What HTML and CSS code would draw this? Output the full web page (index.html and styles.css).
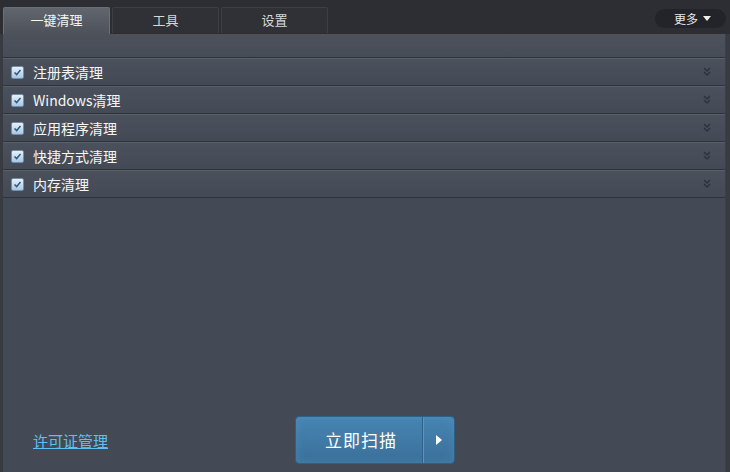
FILE: index.html
```html
<!DOCTYPE html>
<html lang="zh">
<head>
<meta charset="utf-8">
<link rel="stylesheet" href="styles.css">
</head>
<body>
<div class="app">
  <div class="topbar">
    <div class="tabs">
      <div class="tab active">一键清理</div>
      <div class="tab">工具</div>
      <div class="tab">设置</div>
    </div>
    <div class="more">更多 <span class="caret"></span></div>
  </div>
  <div class="panel">
    <div class="subhead"></div>
    <div class="rows">
      <div class="row"><span class="cb"><svg viewBox="0 0 13 13" width="13" height="13"><path d="M3 6.5 L5.5 9 L10 3.5" fill="none" stroke="#2a5a86" stroke-width="1.8"/></svg></span><span class="label">注册表清理</span><span class="chev"><svg viewBox="0 0 8 10" width="8" height="10"><path d="M1 1 L4 4 L7 1 M1 5 L4 8 L7 5" fill="none" stroke="#2a2e35" stroke-width="1.5"/></svg></span></div>
      <div class="row"><span class="cb"><svg viewBox="0 0 13 13" width="13" height="13"><path d="M3 6.5 L5.5 9 L10 3.5" fill="none" stroke="#2a5a86" stroke-width="1.8"/></svg></span><span class="label">Windows清理</span><span class="chev"><svg viewBox="0 0 8 10" width="8" height="10"><path d="M1 1 L4 4 L7 1 M1 5 L4 8 L7 5" fill="none" stroke="#2a2e35" stroke-width="1.5"/></svg></span></div>
      <div class="row"><span class="cb"><svg viewBox="0 0 13 13" width="13" height="13"><path d="M3 6.5 L5.5 9 L10 3.5" fill="none" stroke="#2a5a86" stroke-width="1.8"/></svg></span><span class="label">应用程序清理</span><span class="chev"><svg viewBox="0 0 8 10" width="8" height="10"><path d="M1 1 L4 4 L7 1 M1 5 L4 8 L7 5" fill="none" stroke="#2a2e35" stroke-width="1.5"/></svg></span></div>
      <div class="row"><span class="cb"><svg viewBox="0 0 13 13" width="13" height="13"><path d="M3 6.5 L5.5 9 L10 3.5" fill="none" stroke="#2a5a86" stroke-width="1.8"/></svg></span><span class="label">快捷方式清理</span><span class="chev"><svg viewBox="0 0 8 10" width="8" height="10"><path d="M1 1 L4 4 L7 1 M1 5 L4 8 L7 5" fill="none" stroke="#2a2e35" stroke-width="1.5"/></svg></span></div>
      <div class="row"><span class="cb"><svg viewBox="0 0 13 13" width="13" height="13"><path d="M3 6.5 L5.5 9 L10 3.5" fill="none" stroke="#2a5a86" stroke-width="1.8"/></svg></span><span class="label">内存清理</span><span class="chev"><svg viewBox="0 0 8 10" width="8" height="10"><path d="M1 1 L4 4 L7 1 M1 5 L4 8 L7 5" fill="none" stroke="#2a2e35" stroke-width="1.5"/></svg></span></div>
    </div>
    <div class="spacer"></div>
    <div class="footer">
      <a class="license" href="#">许可证管理</a>
      <div class="scan">
        <span class="scan-main">立即扫描</span>
        <span class="scan-arrow"><svg viewBox="0 0 6 10" width="6" height="10"><path d="M0 0 L6 5 L0 10 Z" fill="#fff"/></svg></span>
      </div>
    </div>
  </div>
</div>
</body>
</html>
```

FILE: styles.css
```css
* { box-sizing: border-box; }
html, body { margin: 0; padding: 0; }
body {
  width: 730px;
  height: 472px;
  background: #2c2e33;
  font-family: "Noto Sans CJK SC", "Liberation Sans", sans-serif;
  overflow: hidden;
}
.app {
  display: flex;
  flex-direction: column;
  height: 472px;
}
.topbar {
  display: flex;
  justify-content: space-between;
  align-items: flex-start;
  height: 34px;
  padding: 7px 4px 0 3px;
}
.tabs {
  display: flex;
  align-items: flex-end;
  gap: 2px;
  height: 27px;
}
.tab {
  width: 107px;
  height: 26px;
  margin-bottom: 1px;
  background: #2f3136;
  border: 1px solid #3c3f45;
  border-bottom: none;
  border-radius: 2px 2px 0 0;
  color: #d8d8d8;
  font-size: 13px;
  line-height: 24px;
  text-align: center;
}
.tab.active {
  height: 27px;
  margin-bottom: 0;
  background: linear-gradient(#60656e, #4c515a);
  border-color: #6a6f78;
  color: #f4f4f4;
}
.more {
  margin-top: 2px;
  width: 71px;
  height: 19px;
  border-radius: 10px;
  background: #222429;
  color: #e8e8e8;
  font-size: 12px;
  line-height: 19px;
  padding-left: 19px;
  display: flex;
  align-items: center;
  gap: 4px;
}
.caret {
  display: inline-block;
  width: 0;
  height: 0;
  border-left: 4px solid transparent;
  border-right: 4px solid transparent;
  border-top: 5px solid #f0f0f0;
  margin-left: 1px;
}
.panel {
  flex: 1;
  display: flex;
  flex-direction: column;
  margin: 0 4px 0 3px;
  background: #434a55;
  border-right: 1px solid #3a3f48;
  box-shadow: -3px 0 0 #383b42, 4px 0 0 #383b42;
}
.subhead {
  height: 24px;
  background: linear-gradient(#4c515a, #474d57);
  border-bottom: 1px solid #2e333a;
}
.rows { display: flex; flex-direction: column; }
.row {
  display: flex;
  align-items: center;
  height: 28px;
  padding: 0 14px 0 8px;
  background: linear-gradient(#4b515c, #444a55);
  border-top: 1px solid #5a606a;
  border-bottom: 1px solid #2e333a;
}
.cb {
  width: 13px;
  height: 13px;
  border-radius: 2px;
  background: linear-gradient(#e6f1fa, #a9c7e2);
  border: 1px solid #6d8fb0;
  display: flex;
  align-items: center;
  justify-content: center;
}
.cb svg { width: 11px; height: 11px; }
.label {
  flex: 1;
  margin-left: 9px;
  color: #f6f6f6;
  font-size: 14px;
  line-height: 20px;
}
.chev { display: flex; opacity: 0.85; }
.spacer { flex: 1; }
.footer {
  display: flex;
  align-items: center;
  height: 56px;
  padding: 0 0 8px 30px;
}
.license {
  color: #5cc0f2;
  font-size: 15px;
  text-decoration: underline;
  width: 262px;
}
.scan {
  display: flex;
  width: 160px;
  height: 48px;
  border-radius: 4px;
  background: linear-gradient(#4784b2, #3a709a);
  border: 1px solid #2f5f84;
  box-shadow: inset 0 0 10px rgba(90,160,210,0.35);
  color: #fff;
}
.scan-main {
  flex: 1;
  font-size: 17px;
  line-height: 46px;
  text-align: center;
  letter-spacing: 1px;
  border-right: 1px solid #30618a;
  padding-left: 4px;
}
.scan-arrow {
  width: 31px;
  display: flex;
  align-items: center;
  justify-content: center;
  border-left: 1px solid #5a95c0;
}
```
